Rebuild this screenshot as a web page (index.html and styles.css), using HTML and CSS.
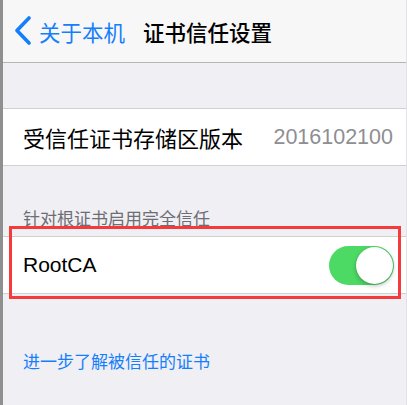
FILE: index.html
```html
<!DOCTYPE html>
<html lang="zh-CN">

<head>
    <meta charset="utf-8">
    <meta name="viewport" content="width=device-width, initial-scale=1.0">
    <title>证书信任设置</title>
    <link rel="stylesheet" href="styles.css">
</head>

<body>
    <div class="screen">
        <header class="navbar">
            <a class="back" href="#">
                <svg class="chevron" width="20" height="30" viewBox="0 0 20 30">
                    <path d="M15 2 L3 14.5 L15 27" fill="none" stroke="#157efb" stroke-width="3.6" stroke-linecap="round" stroke-linejoin="round" />
                </svg>
                <span>关于本机</span>
            </a>
            <h1>证书信任设置</h1>
        </header>

        <div class="spacer"></div>

        <div class="row">
            <span class="label">受信任证书存储区版本</span>
            <span class="value">2016102100</span>
        </div>

        <p class="section-title">针对根证书启用完全信任</p>

        <section class="marked">
            <div class="row">
                <span class="label latin">RootCA</span>
                <span class="toggle on"><span class="knob"></span></span>
            </div>
            <div class="highlight"></div>
        </section>

        <a class="more" href="#">进一步了解被信任的证书</a>
    </div>
</body>

</html>
```

FILE: styles.css
```css
* {
    box-sizing: border-box;
}

body {
    margin: 0;
    background-color: #8f8f8f;
    font-family: "Liberation Sans", "Noto Sans CJK SC", sans-serif;
}

.screen {
    margin-left: 3px;
    min-height: 405px;
    background-color: #efeff4;
    border-right: 1px solid #e2e2e6;
    font-family: "Noto Sans CJK SC", sans-serif;
}

.navbar {
    height: 63px;
    display: flex;
    align-items: center;
    padding-left: 11px;
    background-color: #f7f7f8;
    border-bottom: 1px solid #b4b4b6;
}

.back {
    display: flex;
    align-items: center;
    color: #157efb;
    text-decoration: none;
    font-size: 21.5px;
    margin-right: 18px;
}

.chevron {
    margin-right: 5px;
}

.navbar h1 {
    margin: 0;
    font-size: 21.5px;
    font-weight: 500;
    color: #000;
}

.spacer {
    height: 45px;
}

.row {
    height: 58px;
    display: flex;
    align-items: center;
    justify-content: space-between;
    padding: 0 12px 0 20px;
    background-color: #fff;
    border-top: 1px solid #d0d0d4;
    border-bottom: 1px solid #d0d0d4;
}

.label {
    font-size: 22px;
    color: #000;
}

.latin {
    font-family: "Liberation Sans", sans-serif;
    font-size: 21px;
}

.value {
    font-family: "Liberation Sans", sans-serif;
    font-size: 21.5px;
    color: #8e8e93;
    margin-right: 1px;
}

.section-title {
    margin: 0;
    padding: 42px 0 8px 20px;
    font-size: 17px;
    line-height: 20px;
    color: #6d6d72;
}

.marked {
    position: relative;
}

.highlight {
    position: absolute;
    top: -10px;
    bottom: -5px;
    left: 6px;
    right: 5px;
    border: 3px solid #f53a3c;
}

.toggle {
    width: 65px;
    height: 39px;
    border-radius: 20px;
    background-color: #4cd964;
    display: flex;
    align-items: center;
    justify-content: flex-end;
    padding: 1px;
}

.knob {
    width: 37px;
    height: 37px;
    border-radius: 50%;
    background-color: #fff;
    box-shadow: 0 2px 4px rgba(0, 0, 0, 0.25), 0 0 1px rgba(0, 0, 0, 0.2);
}

.more {
    display: block;
    margin-top: 57px;
    padding-left: 20px;
    font-size: 17px;
    line-height: 20px;
    color: #157efb;
    text-decoration: none;
}
```
